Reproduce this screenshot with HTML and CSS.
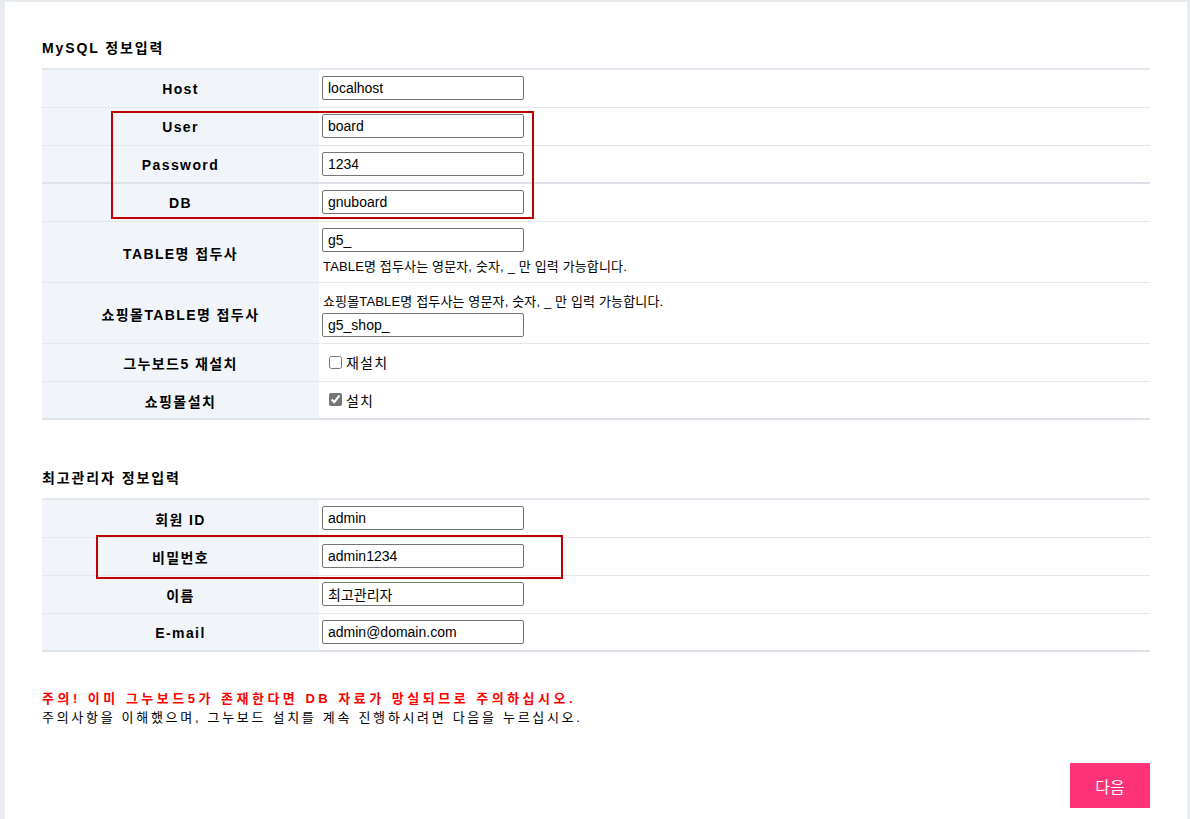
FILE: index.html
```html
<!DOCTYPE html>
<html>
<head>
    <title>그누보드5 설치</title>
    <link rel="stylesheet" href="styles.css">
</head>
<body>
    <div class="wrap">
        <form class="install-form">
            <div class="section">
                <h2 class="section-title">MySQL 정보입력</h2>
                <div class="table-box">
                    <table class="frm-table">
                        <tr>
                            <th>Host</th>
                            <td><input type="text" class="frm-input" value="localhost"></td>
                        </tr>
                        <tr>
                            <th>User</th>
                            <td><input type="text" class="frm-input" value="board"></td>
                        </tr>
                        <tr class="row-strong">
                            <th>Password</th>
                            <td><input type="text" class="frm-input" value="1234"></td>
                        </tr>
                        <tr>
                            <th>DB</th>
                            <td><input type="text" class="frm-input" value="gnuboard"></td>
                        </tr>
                        <tr class="row-tall">
                            <th>TABLE명 접두사</th>
                            <td>
                                <input type="text" class="frm-input" value="g5_">
                                <p class="help">TABLE명 접두사는 영문자, 숫자, _ 만 입력 가능합니다.</p>
                            </td>
                        </tr>
                        <tr class="row-tall row-shop">
                            <th>쇼핑몰TABLE명 접두사</th>
                            <td>
                                <p class="help help-top">쇼핑몰TABLE명 접두사는 영문자, 숫자, _ 만 입력 가능합니다.</p>
                                <input type="text" class="frm-input" value="g5_shop_">
                            </td>
                        </tr>
                        <tr class="row-chk">
                            <th>그누보드5 재설치</th>
                            <td><label class="chk"><input type="checkbox"> 재설치</label></td>
                        </tr>
                        <tr>
                            <th>쇼핑몰설치</th>
                            <td><label class="chk"><input type="checkbox" checked> 설치</label></td>
                        </tr>
                    </table>
                    <div class="mark mark-db"></div>
                </div>
            </div>

            <div class="section section-admin">
                <h2 class="section-title">최고관리자 정보입력</h2>
                <div class="table-box">
                    <table class="frm-table">
                        <tr>
                            <th>회원 ID</th>
                            <td><input type="text" class="frm-input" value="admin"></td>
                        </tr>
                        <tr>
                            <th>비밀번호</th>
                            <td><input type="text" class="frm-input" value="admin1234"></td>
                        </tr>
                        <tr>
                            <th>이름</th>
                            <td><input type="text" class="frm-input" value="최고관리자"></td>
                        </tr>
                        <tr>
                            <th>E-mail</th>
                            <td><input type="text" class="frm-input" value="admin@domain.com"></td>
                        </tr>
                    </table>
                    <div class="mark mark-pw"></div>
                </div>
            </div>

            <div class="notice">
                <p class="notice-warn">주의! 이미 그누보드5가 존재한다면 DB 자료가 망실되므로 주의하십시오.</p>
                <p>주의사항을 이해했으며, 그누보드 설치를 계속 진행하시려면 다음을 누르십시오.</p>
            </div>

            <div class="btn-area">
                <button type="button" class="btn-next">다음</button>
            </div>
        </form>
    </div>
</body>
</html>
```

FILE: styles.css
```css
* {
    margin: 0;
    padding: 0;
    box-sizing: border-box;
}

body {
    background: #e8ecf1;
    font-family: 'Liberation Sans', 'Noto Sans CJK KR', sans-serif;
    color: #000;
}

.wrap {
    margin: 2px 3px 0 5px;
    background: #fff;
    padding: 36px 37px 40px 37px;
    min-height: 830px;
}

.section-title {
    font-size: 14px;
    font-weight: bold;
    line-height: 20px;
    margin-bottom: 10px;
    letter-spacing: 1.9px;
}

.section-admin {
    margin-top: 48px;
}

.table-box {
    position: relative;
}

.frm-table {
    width: 100%;
    border-collapse: collapse;
    border-top: 2px solid #e3e8ee;
    border-bottom: 2px solid #dde2e8;
}

.frm-table th {
    width: 277px;
    background: #f1f4f8;
    font-size: 14px;
    font-weight: bold;
    text-align: center;
    height: 38px;
    padding-top: 2px;
    border-bottom: 1px solid #e3e8ee;
    letter-spacing: 1.4px;
}

.frm-table td {
    height: 38px;
    padding: 0 3px;
    border-bottom: 1px solid #e3e8ee;
    font-size: 14px;
}

.frm-table tr:last-child th,
.frm-table tr:last-child td {
    border-bottom: none;
}

.frm-table .row-strong th,
.frm-table .row-strong td {
    border-bottom: 2px solid #dde2e8;
}

.frm-table .row-tall td {
    height: 61px;
}

.frm-table .row-shop td {
    padding-top: 5px;
}

.frm-table .row-chk td {
    height: 37px;
}

.frm-input {
    display: block;
    width: 202px;
    height: 24px;
    border: 1px solid #767676;
    border-radius: 2px;
    padding: 0 5px;
    font-family: 'Liberation Sans', 'Noto Sans CJK KR', sans-serif;
    font-size: 14px;
    color: #000;
    background: #fff;
}

.help {
    font-size: 13px;
    line-height: 16px;
    margin-top: 7px;
    letter-spacing: 0.15px;
    padding-left: 1px;
}

.help.help-top {
    margin-top: 0;
    margin-bottom: 3px;
}

.chk {
    display: flex;
    align-items: center;
    gap: 4px;
    padding-left: 7px;
    font-size: 14px;
    letter-spacing: 1.2px;
}

.chk input {
    width: 13px;
    height: 13px;
    margin: 0;
    accent-color: #767676;
}

.mark {
    position: absolute;
    border: 2px solid #c00000;
}

.mark-db {
    left: 69px;
    top: 43px;
    width: 423px;
    height: 108px;
}

.mark-pw {
    left: 54px;
    top: 37px;
    width: 467px;
    height: 44px;
}

.notice {
    margin-top: 37px;
    font-size: 13px;
    line-height: 19px;
    letter-spacing: 2.7px;
}

.notice-warn {
    color: #ff0000;
    font-weight: bold;
    letter-spacing: 3.5px;
}

.btn-area {
    display: flex;
    justify-content: flex-end;
    margin-top: 36px;
}

.btn-next {
    width: 80px;
    height: 45px;
    border: none;
    background: #ff3378;
    color: #fff;
    font-family: 'Liberation Sans', 'Noto Sans CJK KR', sans-serif;
    font-size: 16px;
    cursor: pointer;
}
```
